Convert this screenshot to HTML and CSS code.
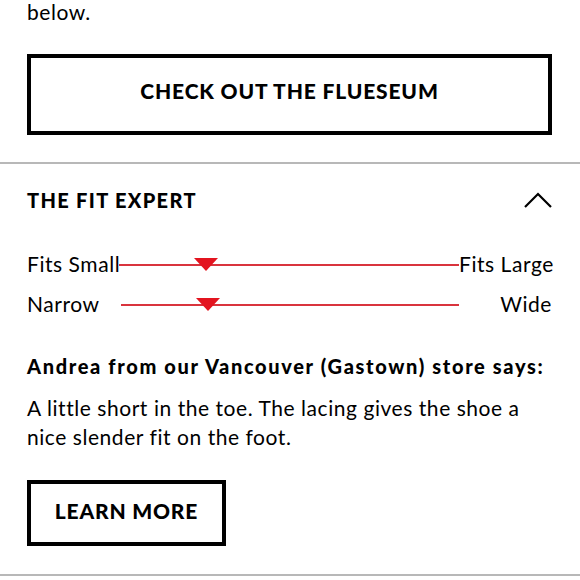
FILE: index.html
```html
<!DOCTYPE html>
<html lang="en">
<head>
<meta charset="utf-8">
<title>The Fit Expert</title>
<link rel="stylesheet" href="styles.css">
</head>
<body>
<div class="page">
  <p class="intro">below.</p>
  <a class="btn btn-wide" href="#">CHECK OUT THE FLUESEUM</a>

  <section class="fit">
    <div class="fit-head">
      <h2 class="fit-title">THE FIT EXPERT</h2>
      <svg class="chevron" width="28" height="16" viewBox="0 0 28 16" aria-hidden="true">
        <polyline points="1,15 14,2 27,15" fill="none" stroke="#000" stroke-width="2.2"/>
      </svg>
    </div>

    <div class="scales">
      <div class="scale">
        <span class="scale-label">Fits Small</span>
        <div class="track"><span class="marker" style="left:25.6%"></span></div>
        <span class="scale-label scale-label-right">Fits Large</span>
      </div>
      <div class="scale">
        <span class="scale-label">Narrow</span>
        <div class="track track-inset"><span class="marker" style="left:25.6%"></span></div>
        <span class="scale-label scale-label-right">Wide</span>
      </div>
    </div>

    <p class="expert-name">Andrea from our Vancouver (Gastown) store says:</p>
    <p class="expert-quote">A little short in the toe. The lacing gives the shoe a nice slender fit on the foot.</p>

    <a class="btn btn-small" href="#">LEARN MORE</a>
  </section>
</div>
</body>
</html>
```

FILE: styles.css
```css
html, body {
  margin: 0;
  padding: 0;
  background: #fff;
}

body {
  font-family: "Lato", "Noto Sans", sans-serif;
  color: #000;
  width: 580px;
  overflow: hidden;
  letter-spacing: 0.55px;
}

.page {
  display: flex;
  flex-direction: column;
}

.intro {
  margin: -2px 27px 0;
  font-size: 21px;
  line-height: 28px;
}

.btn {
  box-sizing: border-box;
  display: flex;
  align-items: center;
  justify-content: center;
  border: 4px solid #000;
  color: #000;
  text-decoration: none;
  font-weight: 900;
  font-size: 21px;
}

.btn-wide {
  margin: 28px 28px 0 27px;
  height: 81px;
  padding-bottom: 9px;
  letter-spacing: 0.85px;
}

.fit {
  margin-top: 27px;
  border-top: 2px solid #b8b8b8;
  border-bottom: 2px solid #b8b8b8;
  padding: 0 28px 0 27px;
  display: flex;
  flex-direction: column;
}

.fit-head {
  margin-top: 18px;
  height: 36px;
  display: flex;
  align-items: center;
  justify-content: space-between;
}

.fit-title {
  margin: 0;
  font-size: 20px;
  font-weight: 900;
  letter-spacing: 1.33px;
}

.chevron {
  display: block;
}

.scales {
  margin-top: 27px;
  display: flex;
  flex-direction: column;
}

.scale {
  display: grid;
  grid-template-columns: 92px 340px 1fr;
  align-items: center;
  height: 40px;
  font-size: 21px;
}

.scale-label {
  white-space: nowrap;
  margin-top: -3px;
}

.scale-label-right {
  text-align: right;
}

.track {
  position: relative;
  height: 2px;
  background: #d9343d;
}

.track-inset {
  margin-left: 2px;
}

.marker {
  position: absolute;
  top: -6px;
  width: 0;
  height: 0;
  margin-left: -12px;
  border-left: 12px solid transparent;
  border-right: 12px solid transparent;
  border-top: 13px solid #e3141f;
}

.expert-name {
  margin: 27px 0 0;
  font-size: 20px;
  font-weight: 900;
  line-height: 29px;
  letter-spacing: 1.65px;
}

.expert-quote {
  margin: 12px 0 0;
  font-size: 21px;
  line-height: 29px;
}

.btn-small {
  margin-top: 29px;
  margin-bottom: 28px;
  width: 199px;
  height: 66px;
  padding-bottom: 5px;
  letter-spacing: 0.8px;
}
```
